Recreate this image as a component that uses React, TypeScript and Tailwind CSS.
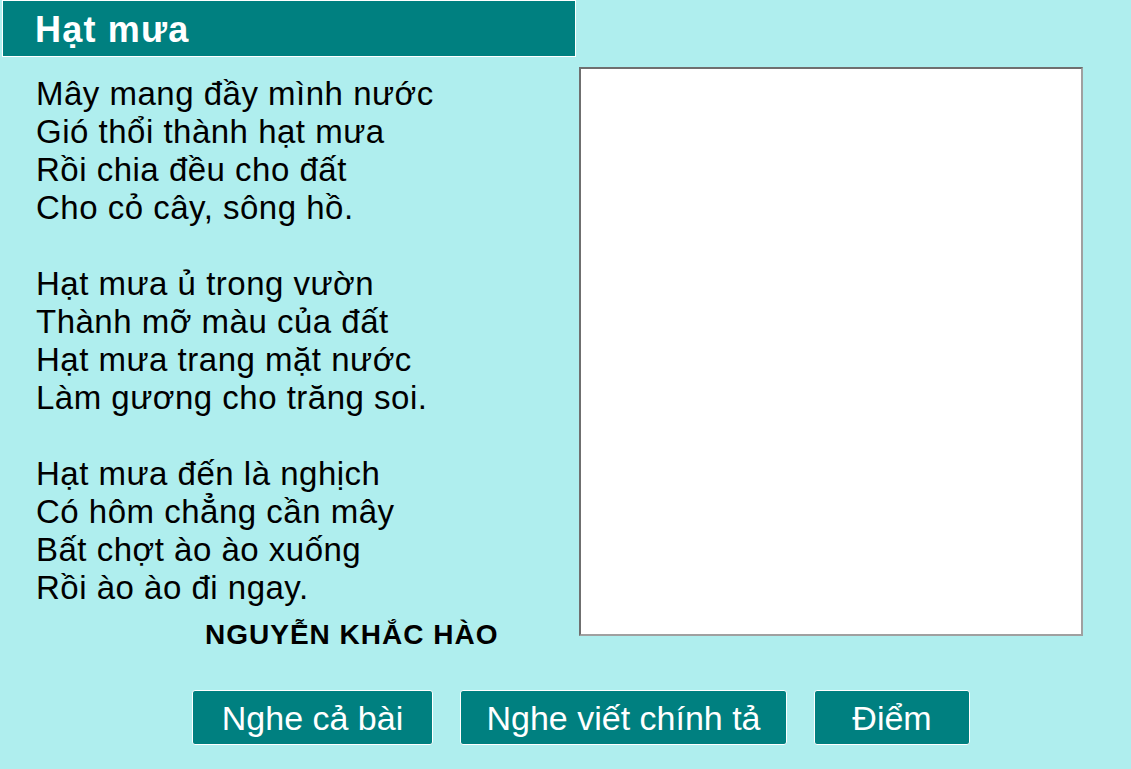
import React from "react";

const stanzas: string[][] = [
  [
    "Mây mang đầy mình nước",
    "Gió thổi thành hạt mưa",
    "Rồi chia đều cho đất",
    "Cho cỏ cây, sông hồ.",
  ],
  [
    "Hạt mưa ủ trong vườn",
    "Thành mỡ màu của đất",
    "Hạt mưa trang mặt nước",
    "Làm gương cho trăng soi.",
  ],
  [
    "Hạt mưa đến là nghịch",
    "Có hôm chẳng cần mây",
    "Bất chợt ào ào xuống",
    "Rồi ào ào đi ngay.",
  ],
];

const buttons = [
  { label: "Nghe cả bài", width: "w-[241px]" },
  { label: "Nghe viết chính tả", width: "w-[327px]" },
  { label: "Điểm", width: "w-[156px]" },
];

export default function App() {
  return (
    <div
      className="w-[1131px] h-[769px] bg-[#afeeee] overflow-hidden"
      style={{ fontFamily: '"Liberation Sans", Arial, sans-serif' }}
    >
      {/* title bar */}
      <div className="ml-[2px] w-[574px] h-[57px] bg-[#008080] border border-white flex items-center pl-[32px]">
        <h1 className="text-white font-bold text-[36px] tracking-[1.2px] leading-none mt-[2px]">
          Hạt mưa
        </h1>
      </div>

      <div className="flex h-[600px]">
        {/* poem */}
        <div className="w-[579px] shrink-0 pt-[18px] pl-[36px]">
          {stanzas.map((lines, i) => (
            <div key={i} className={i > 0 ? "mt-[38px]" : ""}>
              {lines.map((line) => (
                <p
                  key={line}
                  className="text-[33px] leading-[38px] tracking-[0.5px] text-black"
                >
                  {line}
                </p>
              ))}
            </div>
          ))}
          <p className="mt-[12px] ml-[169px] text-[28px] leading-[32px] font-bold tracking-[1px] text-black">
            NGUYỄN KHẮC HÀO
          </p>
        </div>

        {/* answer area */}
        <div className="mt-[10px] w-[504px] h-[569px] bg-white border-2 border-t-[#6f6f6f] border-l-[#6f6f6f] border-r-[#a0a0a0] border-b-[#a0a0a0]" />
      </div>

      {/* controls */}
      <div className="mt-[33px] pl-[192px] flex gap-[27px]">
        {buttons.map((b) => (
          <button
            key={b.label}
            className={`${b.width} h-[55px] bg-[#008080] border border-white rounded-[3px] text-white text-[34px] leading-none flex items-center justify-center`}
          >
            {b.label}
          </button>
        ))}
      </div>
    </div>
  );
}
